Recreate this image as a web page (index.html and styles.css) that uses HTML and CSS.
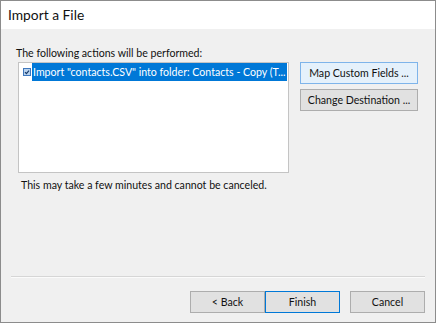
FILE: index.html
```html
<!DOCTYPE html>
<html>
<head>
<meta charset="utf-8">
<link rel="stylesheet" href="styles.css">
</head>
<body>
<div class="window">
  <div class="titlebar">Import a File</div>
  <div class="content">
    <div class="label">The following actions will be performed:</div>
    <div class="main-row">
      <div class="listbox">
        <div class="item">
          <span class="check">
            <svg width="8" height="8" viewBox="0 0 8 8"><rect x="0.5" y="0.5" width="7" height="7" fill="#b9d3ef" stroke="#3f78bd"/><path d="M2 4.2 L3.4 5.6 L6 2.6" fill="none" stroke="#173a6b" stroke-width="1.2"/></svg>
          </span>
          <span class="item-text">Import "contacts.CSV" into folder: Contacts - Copy (T...</span>
        </div>
      </div>
      <div class="side-buttons">
        <div class="btn btn-hover">Map Custom Fields ...</div>
        <div class="btn">Change Destination ...</div>
      </div>
    </div>
    <div class="note">This may take a few minutes and cannot be canceled.</div>
    <div class="spacer"></div>
    <div class="separator"></div>
    <div class="footer">
      <div class="btn btn-footer">&lt; Back</div>
      <div class="btn btn-footer btn-default">Finish</div>
      <div class="btn btn-footer btn-cancel">Cancel</div>
    </div>
  </div>
</div>
</body>
</html>
```
FILE: styles.css
```css
html, body {
  margin: 0;
  padding: 0;
  background: #f0f0f0;
}
body {
  font-family: Lato, "Noto Sans", sans-serif;
  font-size: 10.6px;
  color: #000;
}
.window {
  box-sizing: border-box;
  width: 436px;
  height: 323px;
  border: 1px solid #8c8c8c;
  display: flex;
  flex-direction: column;
}
.titlebar {
  height: 28px;
  line-height: 28px;
  background: #fff;
  padding-left: 7px;
  font-size: 13.8px;
  color: #111;
}
.content {
  flex: 1;
  background: #f0f0f0;
  padding: 16px 10px 0 10px;
  display: flex;
  flex-direction: column;
}
.label {
  line-height: 16px;
  margin-left: 5px;
  color: #111;
}
.main-row {
  display: flex;
  margin-top: 1px;
}
.listbox {
  box-sizing: border-box;
  margin-left: 7px;
  width: 271px;
  height: 111px;
  background: #fff;
  border: 1px solid #c4c4c4;
  padding: 0 1px;
}
.item {
  display: flex;
  align-items: center;
  height: 18px;
}
.check {
  width: 8px;
  height: 8px;
  margin: 0 1px 0 3px;
  display: flex;
}
.item-text {
  flex: 1;
  background: #0078d7;
  color: #fff;
  height: 18px;
  line-height: 18px;
  padding-left: 1px;
  white-space: nowrap;
  overflow: hidden;
}
.side-buttons {
  margin-left: 11px;
  display: flex;
  flex-direction: column;
  gap: 5px;
}
.btn {
  box-sizing: border-box;
  height: 22px;
  line-height: 20px;
  border: 1px solid #adadad;
  background: #e1e1e1;
  text-align: center;
  color: #111;
  white-space: nowrap;
}
.side-buttons .btn {
  width: 118px;
}
.btn-hover {
  background: #e5f1fb;
  border-color: #7eb4ea;
}
.note {
  margin-top: 4px;
  margin-left: 10px;
  line-height: 16px;
  color: #111;
}
.spacer {
  flex: 1;
}
.separator {
  height: 1px;
  background: #d6d6d6;
  border-bottom: 1px solid #fbfbfb;
}
.footer {
  display: flex;
  justify-content: flex-end;
  margin-top: 13px;
  margin-bottom: 9px;
}
.btn-footer {
  width: 75px;
}
.btn-default {
  border-color: #0078d7;
}
.btn-cancel {
  margin-left: 10px;
}
```
